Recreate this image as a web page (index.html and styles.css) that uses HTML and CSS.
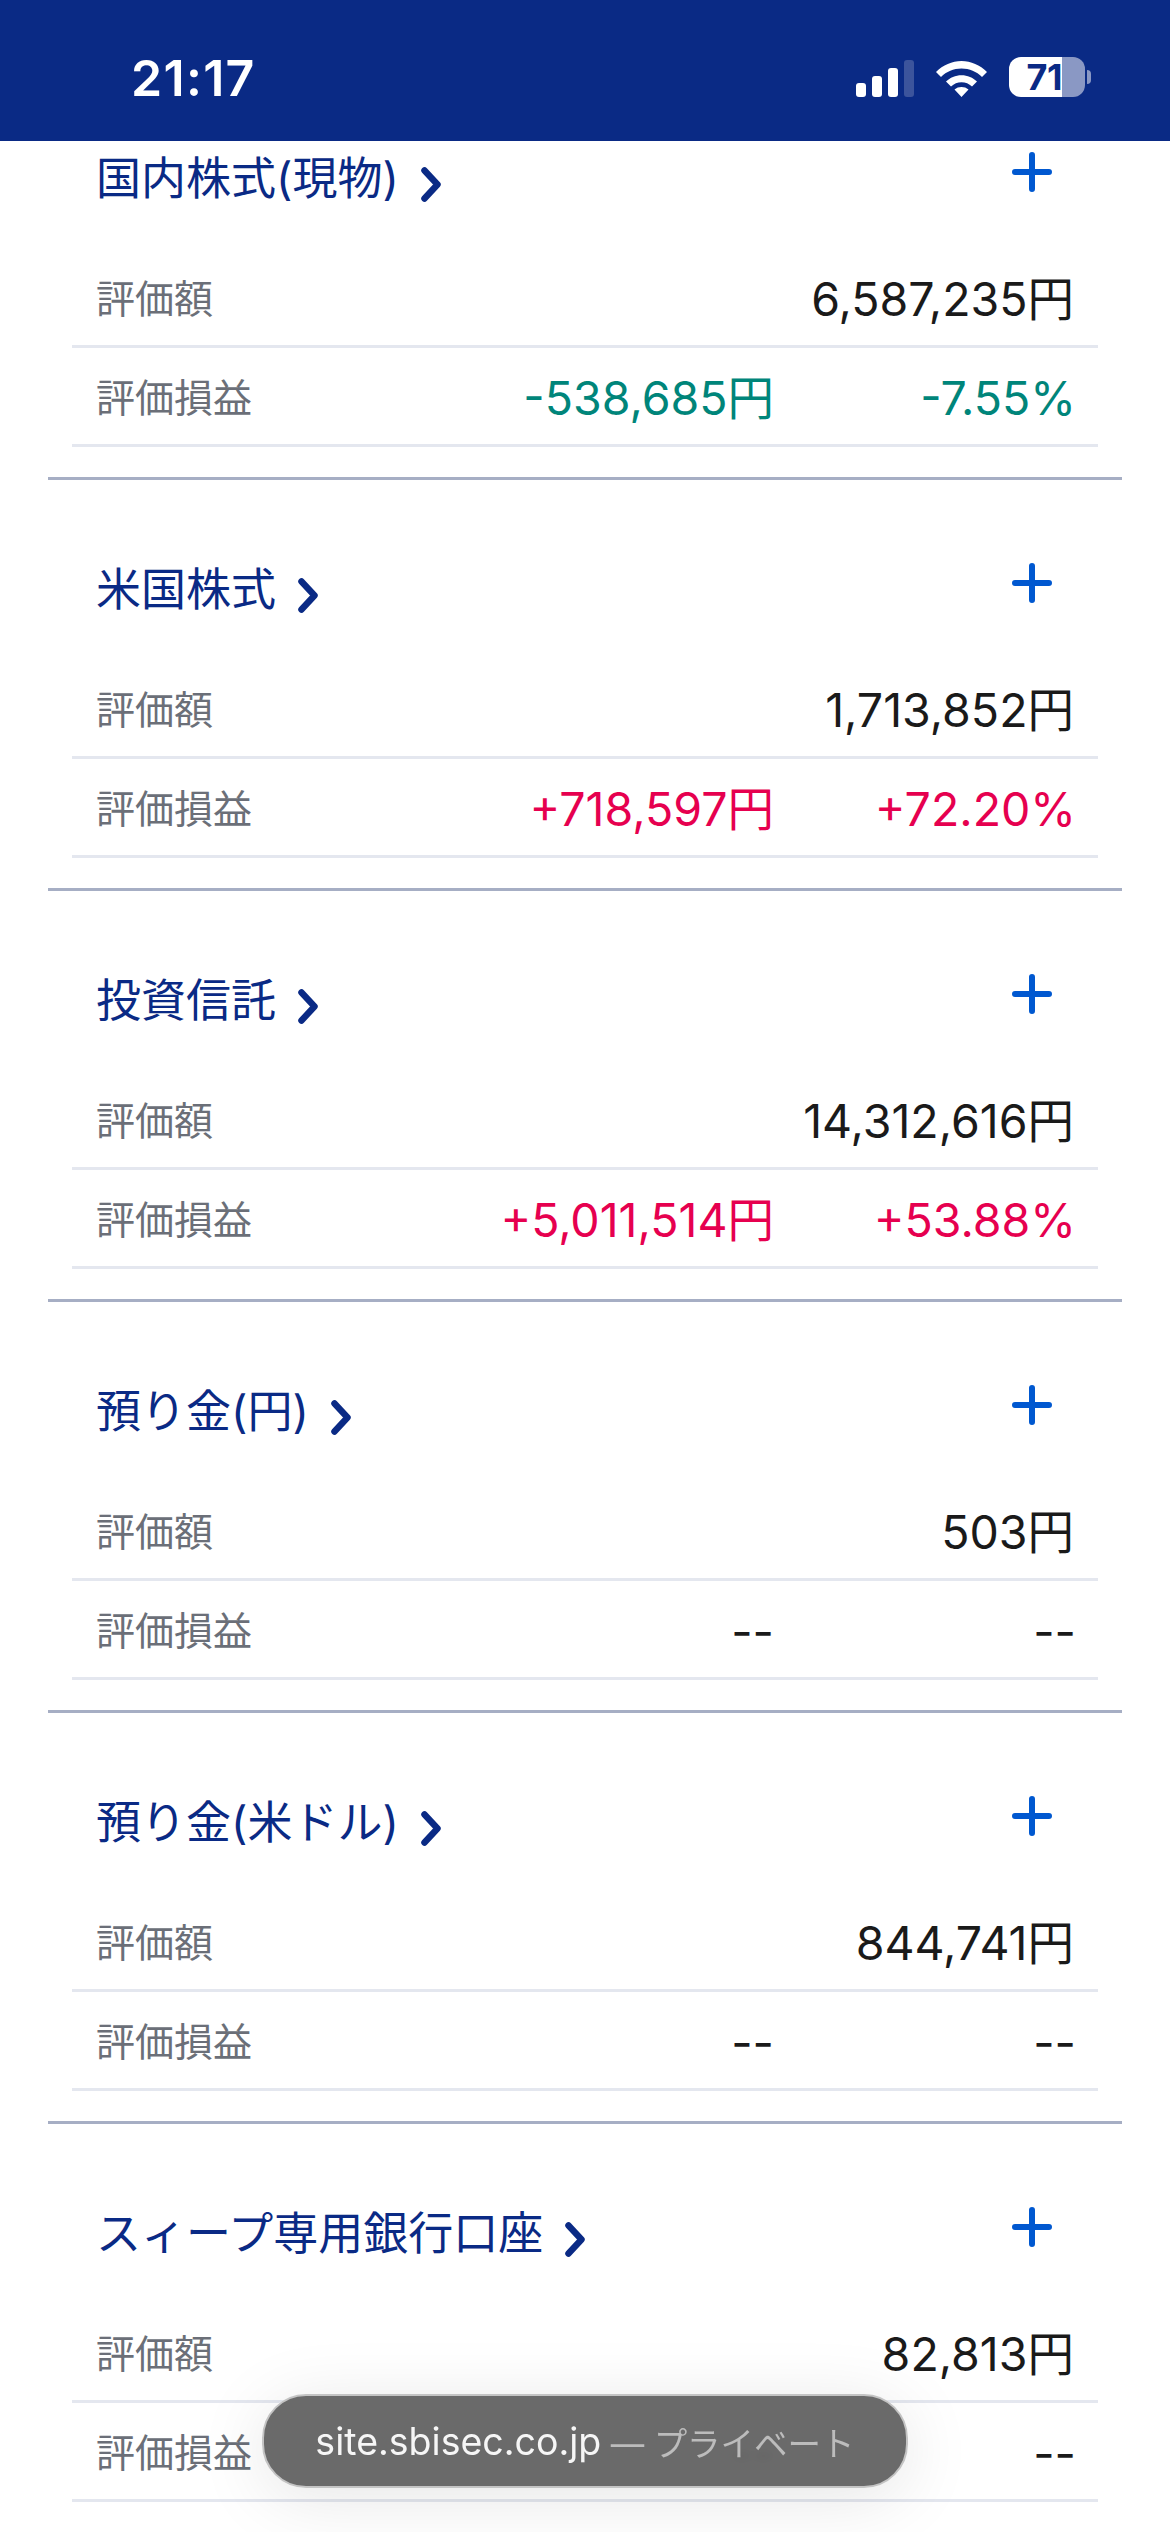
FILE: index.html
```html
<!DOCTYPE html>
<html lang="ja">
<head>
<meta charset="utf-8">
<title>SBI</title>
<link rel="stylesheet" href="styles.css">
</head>
<body>
<header class="status">
  <span class="time">21:17</span>
  <div class="status-icons">
    <div class="signal"><i class="b1"></i><i class="b2"></i><i class="b3"></i><i class="b4"></i></div>
    <svg class="wifi" viewBox="0 0 51 37" width="51" height="37"><path d="M0 12C7 5 16 1 25.500 1S44 5 51 12L46 17C40.500 11.500 33.500 8.500 25.500 8.500S10.500 11.500 5 17Z M10 21.500C14 17.500 19.500 15.200 25.500 15.200S37 17.500 41 21.500L36 26.500C33 23.800 29.500 22.300 25.500 22.300S18 23.800 15 26.500Z M18.500 29.500C20.500 27.800 22.900 27 25.500 27S30.500 27.800 32.500 29.500L25.500 37Z" fill="#fff"/></svg>
    <div class="battery">
      <div class="battery-body"><span class="battery-num">71</span></div>
      <div class="battery-cap"></div>
    </div>
  </div>
</header>
<main class="list">
  <section class="asset">
    <div class="asset-head">
      <a class="asset-title">国内株式(現物)<svg class="chev" viewBox="0 0 20 35" width="20" height="35"><path d="M3.500 3.500L16.500 17.500L3.500 31.500" fill="none" stroke="#0a2a85" stroke-width="6.500" stroke-linecap="round" stroke-linejoin="round"/></svg></a>
      <svg class="plus" viewBox="0 0 40 40" width="40" height="40"><path d="M20 3V37M3 20H37" fill="none" stroke="#0058d0" stroke-width="6" stroke-linecap="round"/></svg>
    </div>
    <div class="row"><span class="label">評価額</span><span class="val">6,587,235円</span></div>
    <div class="row"><span class="label">評価損益</span><span class="val mid down">-538,685円</span><span class="val pct down">-7.55%</span></div>
  </section>
  <section class="asset">
    <div class="asset-head">
      <a class="asset-title">米国株式<svg class="chev" viewBox="0 0 20 35" width="20" height="35"><path d="M3.500 3.500L16.500 17.500L3.500 31.500" fill="none" stroke="#0a2a85" stroke-width="6.500" stroke-linecap="round" stroke-linejoin="round"/></svg></a>
      <svg class="plus" viewBox="0 0 40 40" width="40" height="40"><path d="M20 3V37M3 20H37" fill="none" stroke="#0058d0" stroke-width="6" stroke-linecap="round"/></svg>
    </div>
    <div class="row"><span class="label">評価額</span><span class="val">1,713,852円</span></div>
    <div class="row"><span class="label">評価損益</span><span class="val mid up">+718,597円</span><span class="val pct up">+72.20%</span></div>
  </section>
  <section class="asset">
    <div class="asset-head">
      <a class="asset-title">投資信託<svg class="chev" viewBox="0 0 20 35" width="20" height="35"><path d="M3.500 3.500L16.500 17.500L3.500 31.500" fill="none" stroke="#0a2a85" stroke-width="6.500" stroke-linecap="round" stroke-linejoin="round"/></svg></a>
      <svg class="plus" viewBox="0 0 40 40" width="40" height="40"><path d="M20 3V37M3 20H37" fill="none" stroke="#0058d0" stroke-width="6" stroke-linecap="round"/></svg>
    </div>
    <div class="row"><span class="label">評価額</span><span class="val">14,312,616円</span></div>
    <div class="row"><span class="label">評価損益</span><span class="val mid up">+5,011,514円</span><span class="val pct up">+53.88%</span></div>
  </section>
  <section class="asset">
    <div class="asset-head">
      <a class="asset-title">預り金(円)<svg class="chev" viewBox="0 0 20 35" width="20" height="35"><path d="M3.500 3.500L16.500 17.500L3.500 31.500" fill="none" stroke="#0a2a85" stroke-width="6.500" stroke-linecap="round" stroke-linejoin="round"/></svg></a>
      <svg class="plus" viewBox="0 0 40 40" width="40" height="40"><path d="M20 3V37M3 20H37" fill="none" stroke="#0058d0" stroke-width="6" stroke-linecap="round"/></svg>
    </div>
    <div class="row"><span class="label">評価額</span><span class="val">503円</span></div>
    <div class="row"><span class="label">評価損益</span><span class="val mid">--</span><span class="val pct">--</span></div>
  </section>
  <section class="asset">
    <div class="asset-head">
      <a class="asset-title">預り金(米ドル)<svg class="chev" viewBox="0 0 20 35" width="20" height="35"><path d="M3.500 3.500L16.500 17.500L3.500 31.500" fill="none" stroke="#0a2a85" stroke-width="6.500" stroke-linecap="round" stroke-linejoin="round"/></svg></a>
      <svg class="plus" viewBox="0 0 40 40" width="40" height="40"><path d="M20 3V37M3 20H37" fill="none" stroke="#0058d0" stroke-width="6" stroke-linecap="round"/></svg>
    </div>
    <div class="row"><span class="label">評価額</span><span class="val">844,741円</span></div>
    <div class="row"><span class="label">評価損益</span><span class="val mid">--</span><span class="val pct">--</span></div>
  </section>
  <section class="asset">
    <div class="asset-head">
      <a class="asset-title">スィープ専用銀行口座<svg class="chev" viewBox="0 0 20 35" width="20" height="35"><path d="M3.500 3.500L16.500 17.500L3.500 31.500" fill="none" stroke="#0a2a85" stroke-width="6.500" stroke-linecap="round" stroke-linejoin="round"/></svg></a>
      <svg class="plus" viewBox="0 0 40 40" width="40" height="40"><path d="M20 3V37M3 20H37" fill="none" stroke="#0058d0" stroke-width="6" stroke-linecap="round"/></svg>
    </div>
    <div class="row"><span class="label">評価額</span><span class="val">82,813円</span></div>
    <div class="row"><span class="label">評価損益</span><span class="val mid">--</span><span class="val pct">--</span></div>
  </section>
</main>
<div class="url-pill"><span class="host">site.sbisec.co.jp</span><span class="mode"> — プライベート</span></div>
</body>
</html>
```
FILE: styles.css
```css
html, body {
  margin: 0;
  height: 2532px;
  overflow: hidden;
  background: #fff;
  font-family: Inter, "Noto Sans CJK JP", sans-serif;
}
.status {
  position: fixed;
  top: 0;
  left: 0;
  right: 0;
  height: 141px;
  background: #0a2a85;
  z-index: 5;
  color: #fff;
}
.time {
  position: absolute;
  left: 131px;
  top: 50px;
  font-size: 50px;
  line-height: 56px;
  font-weight: 600;
  letter-spacing: 1.3px;
}
.status-icons {
  position: absolute;
  left: 856px;
  top: 57px;
  display: flex;
  align-items: center;
  height: 40px;
}
.signal {
  display: flex;
  align-items: flex-end;
  gap: 6px;
  height: 37px;
  margin-right: 22px;
  margin-top: 2px;
}
.signal i {
  display: block;
  width: 10px;
  background: #fff;
  border-radius: 3px;
}
.signal .b1 { height: 14px; }
.signal .b2 { height: 21px; }
.signal .b3 { height: 29px; }
.signal .b4 { height: 37px; background: #3c549c; }
.wifi {
  margin-right: 22px;
  margin-top: 2px;
}
.battery {
  display: flex;
  align-items: center;
}
.battery-body {
  width: 76px;
  height: 40px;
  border-radius: 12px;
  background: linear-gradient(90deg, #fff 0, #fff 53px, #8a98c4 53px);
  display: flex;
  align-items: center;
  justify-content: flex-end;
  padding-right: 23px;
  box-sizing: border-box;
}
.battery-num {
  color: #0a2a85;
  font-size: 36px;
  line-height: 40px;
  font-weight: 700;
  letter-spacing: -0.5px;
}
.battery-cap {
  width: 4px;
  height: 14px;
  margin-left: 2px;
  background: #8a98c4;
  border-radius: 0 4px 4px 0;
}
.list {
  padding-top: 69px;
}
.asset {
  height: 411px;
  box-sizing: border-box;
  margin: 0 48px;
  border-bottom: 3px solid #a6aec4;
  padding: 0 24px;
}
.asset-head {
  height: 180px;
  display: flex;
  justify-content: space-between;
  box-sizing: border-box;
  padding: 83px 46px 0 24px;
}
.asset-title {
  display: flex;
  align-items: flex-start;
  color: #0a2a85;
  font-size: 45px;
  line-height: 54px;
}
.chev {
  margin-left: 22px;
  margin-top: 15px;
}
.row {
  height: 99px;
  box-sizing: border-box;
  border-bottom: 3px solid #e4e7ef;
  display: flex;
  align-items: center;
  padding: 3px 24px 0 24px;
}
.label {
  color: #6b6f78;
  font-size: 39px;
  line-height: 48px;
}
.val {
  margin-left: auto;
  color: #1a1a1a;
  font-size: 46.5px;
  line-height: 54px;
  white-space: nowrap;
}
.pct {
  margin-left: 0;
  margin-right: -2px;
  width: 302px;
  text-align: right;
}
.down { color: #00857a; }
.up { color: #e6004f; }
.url-pill {
  position: fixed;
  left: 262px;
  top: 2394px;
  width: 646px;
  height: 94px;
  box-sizing: border-box;
  border-radius: 44px;
  border: 2px solid #c4c4c4;
  background: rgba(100, 100, 100, 0.96);
  box-shadow: 0 10px 70px rgba(0, 0, 0, 0.1);
  backdrop-filter: blur(4px);
  display: flex;
  justify-content: center;
  align-items: center;
  white-space: pre;
  z-index: 6;
}
.host {
  color: #f6f6f6;
  font-size: 37.5px;
}
.mode {
  color: #bcbcbc;
  font-size: 33.5px;
}
```
